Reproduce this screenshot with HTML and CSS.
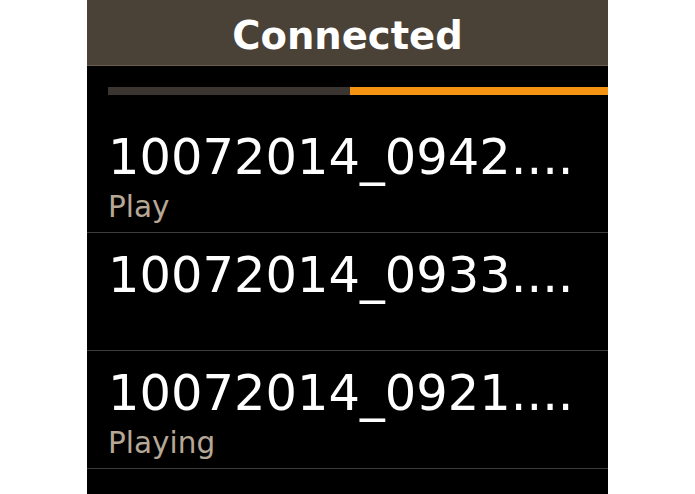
FILE: index.html
```html
<!DOCTYPE html>
<html>
<head>
<meta charset="utf-8">
<link rel="stylesheet" href="styles.css">
</head>
<body>
<div class="panel">
  <div class="header">Connected</div>
  <div class="progress">
    <div class="progress-done"></div>
    <div class="progress-rest"></div>
  </div>
  <ul class="list">
    <li class="item">
      <div class="title">10072014_0942....</div>
      <div class="status">Play</div>
    </li>
    <li class="item">
      <div class="title">10072014_0933....</div>
      <div class="status"></div>
    </li>
    <li class="item">
      <div class="title">10072014_0921....</div>
      <div class="status">Playing</div>
    </li>
  </ul>
</div>
</body>
</html>
```

FILE: styles.css
```css
html, body {
  margin: 0;
  padding: 0;
  background: #ffffff;
  height: 100%;
}

body {
  font-family: "DejaVu Sans", Verdana, sans-serif;
  overflow: hidden;
}

.panel {
  margin-left: 87px;
  width: 521px;
  height: 494px;
  background: #000000;
  display: flex;
  flex-direction: column;
}

.header {
  background: #4a4137;
  border-bottom: 1px solid #6b5f52;
  color: #ffffff;
  font-weight: bold;
  font-size: 38.5px;
  line-height: 50px;
  padding: 11px 0 4px;
  text-align: center;
}

.progress {
  display: flex;
  margin: 21px 0 0 21px;
  height: 8px;
}

.progress-done {
  width: 242px;
  background: #3b3531;
}

.progress-rest {
  flex: 1;
  background: #f59312;
}

.list {
  list-style: none;
  margin: 20px 0 0;
  padding: 0;
}

.item {
  box-sizing: border-box;
  height: 118px;
  border-bottom: 1px solid #3c3c3c;
  padding: 14px 0 0 21px;
}

.title {
  color: #ffffff;
  font-size: 49.5px;
  line-height: 56px;
  white-space: nowrap;
}

.status {
  color: #b7a895;
  font-size: 29.5px;
  line-height: 34px;
  margin-top: 5px;
  height: 34px;
}
```
